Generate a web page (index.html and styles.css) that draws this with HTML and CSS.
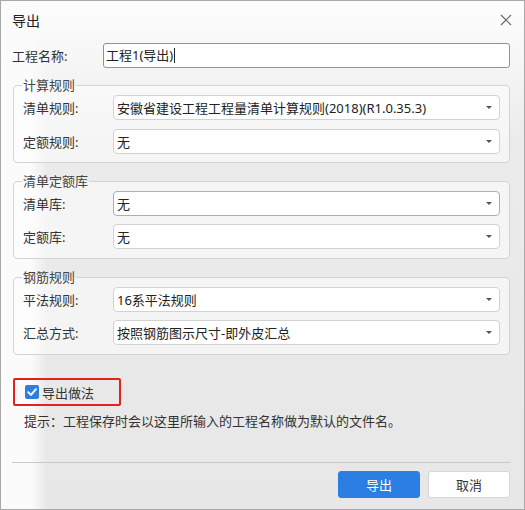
FILE: index.html
```html
<!DOCTYPE html>
<html lang="zh-CN">

<head>
    <meta charset="UTF-8">
    <title>导出</title>
    <link rel="stylesheet" href="styles.css">
</head>

<body>
    <div class="dialog">
        <!-- Title bar -->
        <div class="title-bar">
            <span class="title">导出</span>
            <svg class="close" width="12" height="12" viewBox="0 0 12 12">
                <path d="M1 1 L11 11 M11 1 L1 11" stroke="#6b6b6b" stroke-width="1.2" fill="none" />
            </svg>
        </div>

        <div class="name-row">
            <span class="name-label">工程名称:</span>
            <div class="name-input">工程1(导出)<span class="caret"></span></div>
        </div>

        <fieldset class="group first">
            <legend>计算规则</legend>
            <div class="row">
                <span class="label">清单规则:</span>
                <div class="select">安徽省建设工程工程量清单计算规则(2018)(R1.0.35.3)<span class="arrow"></span></div>
            </div>
            <div class="row">
                <span class="label">定额规则:</span>
                <div class="select">无<span class="arrow"></span></div>
            </div>
        </fieldset>

        <fieldset class="group">
            <legend>清单定额库</legend>
            <div class="row">
                <span class="label">清单库:</span>
                <div class="select focused">无<span class="arrow"></span></div>
            </div>
            <div class="row">
                <span class="label">定额库:</span>
                <div class="select">无<span class="arrow"></span></div>
            </div>
        </fieldset>

        <fieldset class="group">
            <legend>钢筋规则</legend>
            <div class="row">
                <span class="label">平法规则:</span>
                <div class="select">16系平法规则<span class="arrow"></span></div>
            </div>
            <div class="row">
                <span class="label">汇总方式:</span>
                <div class="select">按照钢筋图示尺寸-即外皮汇总<span class="arrow"></span></div>
            </div>
        </fieldset>

        <div class="check-row">
            <span class="checkbox">
                <svg width="14" height="14" viewBox="0 0 14 14">
                    <path d="M3.2 7.2 L6 9.9 L11 4.2" stroke="#fff" stroke-width="1.9" fill="none" stroke-linecap="round" stroke-linejoin="round" />
                </svg>
            </span>
            <span>导出做法</span>
        </div>

        <p class="hint">提示：工程保存时会以这里所输入的工程名称做为默认的文件名。</p>

        <div class="footer">
            <button class="btn primary">导出</button>
            <button class="btn">取消</button>
        </div>
    </div>
</body>

</html>
```

FILE: styles.css
```css
/* Reset */
* {
    margin: 0;
    padding: 0;
    box-sizing: border-box;
}

body {
    width: 525px;
    height: 510px;
    font-family: "Noto Sans", "Noto Sans CJK SC", sans-serif;
    font-size: 13px;
    color: #333;
    overflow: hidden;
}

/* Dialog window */
.dialog {
    width: 525px;
    height: 510px;
    border: 1px solid #a9a9a9;
    padding: 0 14px 0 11px;
    display: flex;
    flex-direction: column;
    background:
        linear-gradient(to right, #fbfbfb 0, #fbfbfb 30px, rgba(251, 251, 251, 0) 46px),
        linear-gradient(to bottom, #fdfdfd 0, #f6f6f6 60px, #ebebeb 140px, #e7e7e7 100%);
}

.title-bar {
    height: 42px;
    padding-bottom: 4px;
    display: flex;
    align-items: center;
    justify-content: space-between;
}

.title {
    font-size: 14px;
    color: #222;
}

.close {
    margin-right: -2px;
}

/* Project name */
.name-row {
    display: flex;
    align-items: center;
    height: 25px;
}

.name-label {
    width: 91px;
}

.name-input {
    flex: 1;
    height: 25px;
    line-height: 23px;
    border: 1px solid #5b9ded;
    border-radius: 3px;
    background: #fff;
    padding-left: 2px;
    color: #222;
    display: flex;
    align-items: center;
}

.caret {
    display: inline-block;
    width: 1px;
    height: 15px;
    background: #222;
    margin-left: 1px;
}

/* Group boxes */
.group {
    margin: 10px 0 0 1px;
    border: 1px solid #d4d4d4;
    border-radius: 4px;
    padding: 3px 9px 9px 9px;
    background: rgba(255, 255, 255, 0.5);
    display: flex;
    flex-direction: column;
    gap: 8px;
}

.group.first {
    gap: 9px;
    padding-bottom: 8px;
}

.group + .group {
    margin-top: 11px;
}

.group legend {
    line-height: 14px;
    padding: 0 1px;
    margin-left: -1px;
    color: #444;
}

.row {
    display: flex;
    align-items: center;
}

.label {
    width: 90px;
}

.select {
    flex: 1;
    height: 25px;
    border: 1px solid #d2d2d2;
    border-radius: 4px;
    background: #fff;
    padding-left: 3px;
    color: #222;
    display: flex;
    align-items: center;
    justify-content: space-between;
}

.select.focused {
    border-color: #8fb2e8;
}

.arrow {
    width: 0;
    height: 0;
    margin-right: 7px;
    border-left: 3px solid transparent;
    border-right: 3px solid transparent;
    border-top: 3px solid #555;
}

/* Export method checkbox (highlighted) */
.check-row {
    margin: 23px 0 0 1px;
    width: 108px;
    height: 28px;
    border: 2px solid #e3221d;
    border-radius: 2px;
    padding-left: 10px;
    display: flex;
    align-items: center;
    gap: 3px;
}

.checkbox {
    width: 14px;
    height: 14px;
    border-radius: 2px;
    background: #2f7de1;
    display: flex;
}

.hint {
    margin: 7px 0 0 12px;
    line-height: 16px;
}

/* Footer buttons */
.footer {
    margin-top: auto;
    margin-bottom: 11px;
    border-top: 1px solid #c9c9c9;
    padding-top: 8px;
    display: flex;
    justify-content: flex-end;
    gap: 8px;
}

.btn {
    width: 82px;
    height: 27px;
    border: 1px solid #d6d6d6;
    border-radius: 3px;
    background: #fff;
    font-family: inherit;
    font-size: 13px;
    color: #333;
}

.btn.primary {
    background: #2b7fe2;
    border-color: #2b7fe2;
    color: #fff;
}
```
